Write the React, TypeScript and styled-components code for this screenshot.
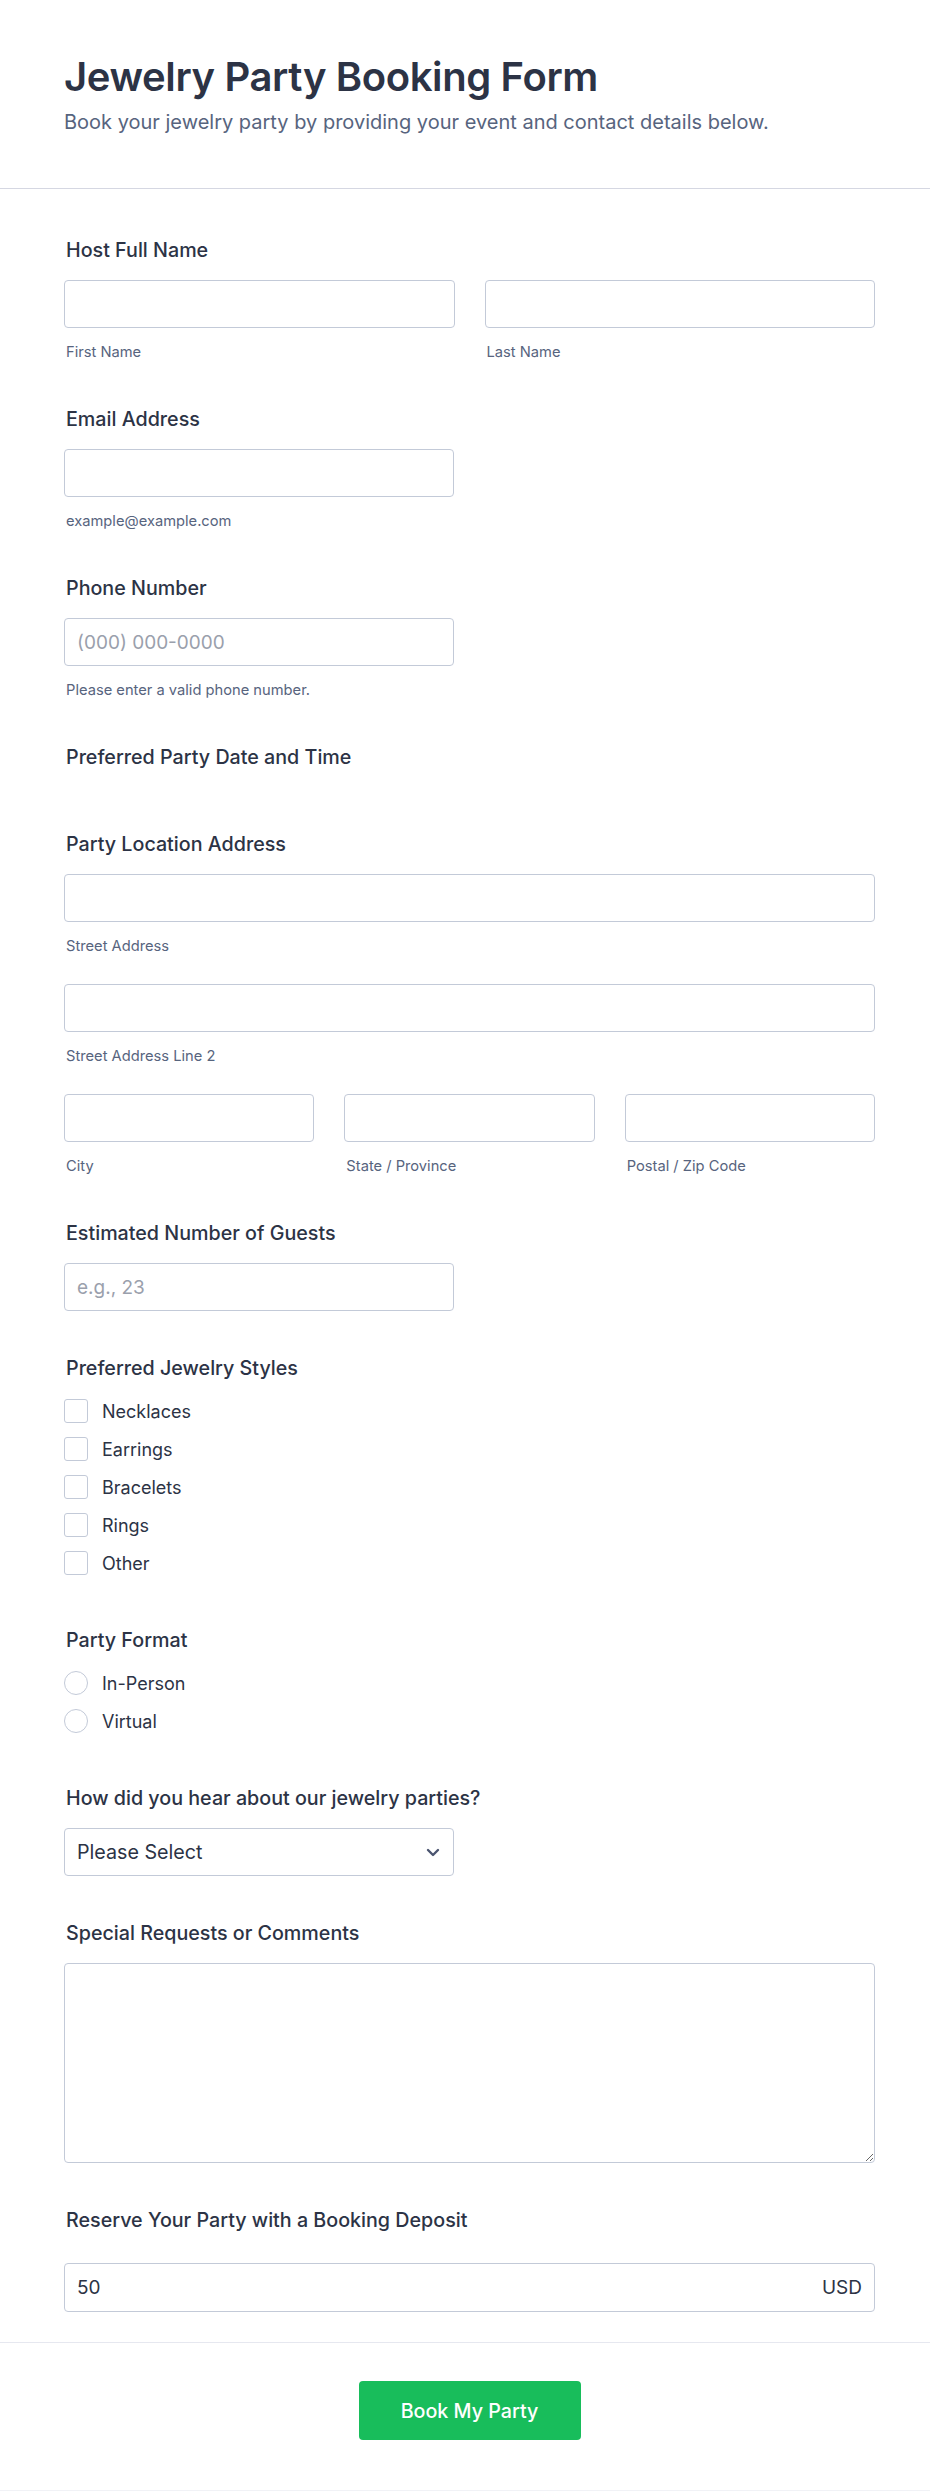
import styled, { createGlobalStyle } from "styled-components";

const GlobalStyle = createGlobalStyle`
  * {
    box-sizing: border-box;
  }
  body {
    margin: 0;
    background: #ffffff;
    font-family: Inter, "Noto Sans", "Liberation Sans", sans-serif;
    color: #2c3345;
  }
`;

const jewelryStyles = ["Necklaces", "Earrings", "Bracelets", "Rings", "Other"];
const partyFormats = ["In-Person", "Virtual"];

export default function App() {
  return (
    <>
      <GlobalStyle />
      <Page>
        <Header>
          <Title>Jewelry Party Booking Form</Title>
          <Subtitle>
            Book your jewelry party by providing your event and contact details below.
          </Subtitle>
        </Header>

        <FormBody>
          <Field>
            <Label>Host Full Name</Label>
            <Columns count={2}>
              <div>
                <TextInput />
                <SubLabel>First Name</SubLabel>
              </div>
              <div>
                <TextInput />
                <SubLabel>Last Name</SubLabel>
              </div>
            </Columns>
          </Field>

          <Field>
            <Label>Email Address</Label>
            <HalfWidth>
              <TextInput />
              <SubLabel>example@example.com</SubLabel>
            </HalfWidth>
          </Field>

          <Field>
            <Label>Phone Number</Label>
            <HalfWidth>
              <TextInput placeholder="(000) 000-0000" />
              <SubLabel>Please enter a valid phone number.</SubLabel>
            </HalfWidth>
          </Field>

          <Field>
            <Label>Preferred Party Date and Time</Label>
          </Field>

          <Field>
            <Label>Party Location Address</Label>
            <AddressRows>
              <div>
                <TextInput />
                <SubLabel>Street Address</SubLabel>
              </div>
              <div>
                <TextInput />
                <SubLabel>Street Address Line 2</SubLabel>
              </div>
              <Columns count={3}>
                <div>
                  <TextInput />
                  <SubLabel>City</SubLabel>
                </div>
                <div>
                  <TextInput />
                  <SubLabel>State / Province</SubLabel>
                </div>
                <div>
                  <TextInput />
                  <SubLabel>Postal / Zip Code</SubLabel>
                </div>
              </Columns>
            </AddressRows>
          </Field>

          <Field>
            <Label>Estimated Number of Guests</Label>
            <HalfWidth>
              <TextInput placeholder="e.g., 23" />
            </HalfWidth>
          </Field>

          <Field extraSpace>
            <Label>Preferred Jewelry Styles</Label>
            <OptionList>
              {jewelryStyles.map((item) => (
                <Option key={item}>
                  <CheckMark shape="square" />
                  {item}
                </Option>
              ))}
            </OptionList>
          </Field>

          <Field extraSpace>
            <Label>Party Format</Label>
            <OptionList>
              {partyFormats.map((item) => (
                <Option key={item}>
                  <CheckMark shape="circle" />
                  {item}
                </Option>
              ))}
            </OptionList>
          </Field>

          <Field>
            <Label>How did you hear about our jewelry parties?</Label>
            <HalfWidth>
              <SelectBox>
                <span>Please Select</span>
                <svg width="14" height="9" viewBox="0 0 14 9" fill="none">
                  <path
                    d="M2 2l5 5 5-5"
                    stroke="#4b5570"
                    strokeWidth="2.4"
                    strokeLinecap="round"
                    strokeLinejoin="round"
                  />
                </svg>
              </SelectBox>
            </HalfWidth>
          </Field>

          <Field>
            <Label>Special Requests or Comments</Label>
            <TextArea />
          </Field>

          <Field>
            <Label wide>Reserve Your Party with a Booking Deposit</Label>
            <AmountBox>
              <span>50</span>
              <span>USD</span>
            </AmountBox>
          </Field>
        </FormBody>

        <Footer>
          <SubmitButton type="button">Book My Party</SubmitButton>
        </Footer>
      </Page>
    </>
  );
}

const Page = styled.div`
  width: 930px;
  min-height: 2491px;
  background: #ffffff;
  border-bottom: 1px solid #f1f2f6;
`;

const Header = styled.header`
  padding: 53px 55px 52px 64px;
  border-bottom: 1px solid #d5d7e2;
`;

const Title = styled.h1`
  margin: 0;
  font-size: 40px;
  line-height: 48px;
  font-weight: 600;
  letter-spacing: -0.38px;
  color: #2c3345;
`;

const Subtitle = styled.p`
  margin: 8px 0 0;
  font-size: 20px;
  line-height: 27px;
  color: #57647e;
`;

const FormBody = styled.main`
  display: flex;
  flex-direction: column;
  gap: 44px;
  padding: 48px 55px 30px 64px;
`;

const Field = styled.section<{ extraSpace?: boolean }>`
  display: flex;
  flex-direction: column;
  padding-bottom: ${(p) => (p.extraSpace ? "8px" : "0")};
`;

const Label = styled.label<{ wide?: boolean }>`
  display: block;
  padding-left: 2px;
  margin-bottom: ${(p) => (p.wide ? "29px" : "16px")};
  font-size: 19.7px;
  line-height: 27px;
  font-weight: 500;
  color: #2c3345;
`;

const SubLabel = styled.div`
  margin-top: 14px;
  padding-left: 2px;
  font-size: 14.7px;
  line-height: 20px;
  color: #57647e;
`;

const Columns = styled.div<{ count: number }>`
  display: grid;
  grid-template-columns: repeat(${(p) => p.count}, 1fr);
  column-gap: 30px;
`;

const HalfWidth = styled.div`
  width: 390px;
`;

const AddressRows = styled.div`
  display: flex;
  flex-direction: column;
  gap: 28px;
`;

const TextInput = styled.input`
  display: block;
  width: 100%;
  height: 48px;
  padding: 0 12px;
  border: 1px solid #c3cad8;
  border-radius: 4px;
  background: #ffffff;
  font-family: inherit;
  font-size: 19px;
  color: #2c3345;
  outline: none;

  &::placeholder {
    color: #9aa0ac;
  }
`;

const OptionList = styled.div`
  display: flex;
  flex-direction: column;
  gap: 14px;
  margin-top: 1px;
`;

const Option = styled.div`
  display: flex;
  align-items: center;
  gap: 14px;
  height: 24px;
  font-size: 18px;
  color: #2c3345;
`;

const CheckMark = styled.span<{ shape: "square" | "circle" }>`
  flex: none;
  width: 24px;
  height: 24px;
  border: 1px solid #c3cad8;
  border-radius: ${(p) => (p.shape === "circle" ? "50%" : "3px")};
  background: #ffffff;
`;

const SelectBox = styled.div`
  display: flex;
  align-items: center;
  justify-content: space-between;
  height: 48px;
  padding: 0 13px 0 12px;
  border: 1px solid #c3cad8;
  border-radius: 4px;
  font-size: 19.7px;
  color: #2c3345;
`;

const TextArea = styled.textarea`
  display: block;
  width: 100%;
  height: 200px;
  padding: 12px;
  border: 1px solid #c3cad8;
  border-radius: 4px;
  font-family: inherit;
  font-size: 19px;
  color: #2c3345;
  outline: none;
`;

const AmountBox = styled.div`
  display: flex;
  align-items: center;
  justify-content: space-between;
  height: 49px;
  padding: 0 12px;
  border: 1px solid #c3cad8;
  border-radius: 4px;
  font-size: 19px;
  color: #2c3345;
`;

const Footer = styled.footer`
  display: flex;
  justify-content: center;
  padding: 38px 55px 50px 64px;
  border-top: 1px solid #e6e8f0;
`;

const SubmitButton = styled.button`
  width: 222px;
  height: 59px;
  border: none;
  border-radius: 4px;
  background: #18bd5b;
  color: #ffffff;
  font-family: inherit;
  font-size: 19.7px;
  font-weight: 500;
  cursor: pointer;
`;
